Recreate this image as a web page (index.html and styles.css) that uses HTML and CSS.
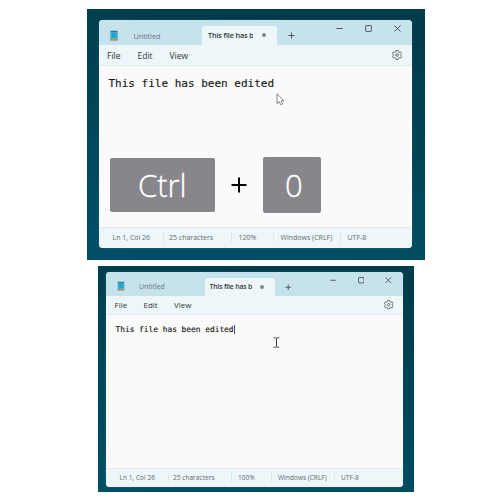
FILE: index.html
```
<!DOCTYPE html>
<html lang="en">
<head>
<meta charset="utf-8">
<title>Notepad zoom</title>
<link rel="stylesheet" href="styles.css">
</head>
<body>
<svg width="0" height="0" class="defs" aria-hidden="true">
  <symbol id="pad" viewBox="0 0 8 11">
    <rect x=".3" y="1" width="7.4" height="8.5" rx=".7" fill="#38b3d6"/>
    <path d="M.6 1h6.8v1H.6z" fill="#1d6f91"/>
    <path d="M1.2.2v1.3M2.6.2v1.3M4 .2v1.3M5.4.2v1.3M6.8.2v1.3" stroke="#4b91a9" stroke-width=".55"/>
    <path d="M1.8 3.5h4.4M1.8 5.1h4.4M1.8 6.7h4.4" stroke="#1c8db4" stroke-width=".7"/>
    <path d="M.1 9.200h7.800v.7q0 .8-.8.8H.900q-.8 0-.8-.8z" fill="#cf8450"/>
  </symbol>
  <symbol id="gear" viewBox="0 0 20 20">
    <path d="M8 .8h4l.6 2.800 2 1.100 2.700-.8 2 3.500-2.100 1.900v1.400l2.100 1.900-2 3.500-2.700-.8-2 1.100-.6 2.800H8l-.6-2.800-2-1.100-2.700.8-2-3.500 2.100-1.900V9.300L.7 7.400l2-3.500 2.700.8 2-1.100z" fill="none" stroke="#51595c" stroke-width="1.700" stroke-linejoin="round"/>
    <circle cx="10" cy="10" r="2.700" fill="none" stroke="#51595c" stroke-width="1.700"/>
  </symbol>
</svg>
<main>
  <section class="desktop large">
    <div class="window">
      <header class="titlebar">
        <svg class="app"><use href="#pad"/></svg>
        <span class="untitled">Untitled</span>
        <div class="tab"><b>This file has b</b><i></i></div>
        <svg class="add" viewBox="0 0 7 7"><path d="M3.500 .5v6M.5 3.500h6"/></svg>
        <svg class="ctl" viewBox="0 0 7 7"><path d="M.3 3.500h6.400"/></svg>
        <svg class="ctl" viewBox="0 0 7 7"><rect x=".6" y=".6" width="5.800" height="5.800" rx=".5"/></svg>
        <svg class="ctl" viewBox="0 0 7 7"><path d="M.5.5l6 6M6.500.5l-6 6"/></svg>
      </header>
      <nav class="menu"><span>File</span><span>Edit</span><span>View</span><svg class="gear"><use href="#gear"/></svg></nav>
      <div class="editor">
        <p>This file has been edited</p>
        <svg class="pointer" viewBox="0 0 9 13"><path d="M1 .8v9.800l2.200-2 1.500 3.100 1.900-.8-1.400-3H8z"/></svg>
        <div class="keys"><kbd class="ctrl">Ctrl</kbd><svg class="plus" viewBox="0 0 16 16"><path d="M8 .5v15M.5 8h15"/></svg><kbd class="zero">0</kbd></div>
      </div>
      <footer class="status"><span>Ln 1, Col 26</span><span>25 characters</span><span>120%</span><span>Windows (CRLF)</span><span>UTF-8</span></footer>
    </div>
  </section>
  <section class="desktop small">
    <div class="window">
      <header class="titlebar">
        <svg class="app"><use href="#pad"/></svg>
        <span class="untitled">Untitled</span>
        <div class="tab"><b>This file has b</b><i></i></div>
        <svg class="add" viewBox="0 0 7 7"><path d="M3.500 .5v6M.5 3.500h6"/></svg>
        <svg class="ctl" viewBox="0 0 7 7"><path d="M.3 3.500h6.400"/></svg>
        <svg class="ctl" viewBox="0 0 7 7"><rect x=".6" y=".6" width="5.800" height="5.800" rx=".5"/></svg>
        <svg class="ctl" viewBox="0 0 7 7"><path d="M.5.5l6 6M6.500.5l-6 6"/></svg>
      </header>
      <nav class="menu"><span>File</span><span>Edit</span><span>View</span><svg class="gear"><use href="#gear"/></svg></nav>
      <div class="editor">
        <p>This file has been edited<i class="caret"></i></p>
        <svg class="ibeam" viewBox="0 0 7 11"><path d="M.7.8h2.100l.7.5.7-.5h2.100M3.500 1.200v8.600M.7 10.200h2.100l.7-.5.7.5h2.100"/></svg>
      </div>
      <footer class="status"><span>Ln 1, Col 26</span><span>25 characters</span><span>100%</span><span>Windows (CRLF)</span><span>UTF-8</span></footer>
    </div>
  </section>
</main>
</body>
</html>
```
FILE: styles.css
```
* { box-sizing: border-box; }
body { margin: 0; width: 500px; height: 500px; overflow: hidden; background: #fff; font-family: "Open Sans", "Noto Sans", sans-serif; }
.defs { position: absolute; }
main { padding-top: 9px; }
svg { display: block; }
.desktop { background: linear-gradient(10deg, #005068, #004a5e 30%, #003c4b 90%); }
.large { width: 338px; height: 250.500px; margin-left: 87px; padding: 11px 13px 12px 11.500px; }
.small { width: 316px; height: 226.500px; margin: 6px 0 0 97.500px; padding: 6.500px 11px 5.500px 8.500px; }
.window { height: 100%; display: flex; flex-direction: column; border-radius: 4px; overflow: hidden; background: #fafafa; box-shadow: 0 0 1px #6e9aa5; }
.titlebar { display: grid; background: #c5e2ed; flex: none; }
.titlebar > * { align-self: start; }
.untitled { color: #68777d; white-space: nowrap; }
.tab { display: flex; align-items: center; justify-content: space-between; background: #edf6f9; border-radius: 3px 3px 0 0; }
.tab b { overflow: hidden; white-space: nowrap; color: #30383b; font-weight: 600; }
.tab i { width: 4px; height: 4px; border-radius: 50%; background: #7c878b; }
.add, .ctl { fill: none; stroke: #3e4c51; stroke-width: .9; }
.menu { display: grid; align-items: center; flex: none; background: #edf6f9; border-bottom: 1px solid #dfecef; color: #30363a; }
.editor { flex: 1; position: relative; background: #fafafa; color: #18191a; }
.editor p { margin: 0; font-family: "DejaVu Sans Mono", monospace; white-space: pre; -webkit-text-stroke: .15px #18191a; }
.status { display: grid; align-items: center; flex: none; background: #edf6f9; border-top: 1px solid #e0ebee; color: #626b6f; }
.status span { white-space: nowrap; }
.status span + span { border-left: 1px solid #dce5e8; }

.large .titlebar { height: 25px; grid-template-columns: 11px 24px 68.500px 74.500px 11.500px 48px 28.500px 29.500px 17px; }
.large .titlebar .app { grid-column: 2; width: 8px; height: 11px; margin-top: 9.500px; }
.large .untitled { font-size: 7.200px; line-height: 12px; margin-top: 9.500px; }
.large .tab { height: 19.500px; margin-top: 5.500px; padding: 0 11px 0 6px; font-size: 7.300px; }
.large .tab b { width: 45px; letter-spacing: -.15px; }
.large .add { width: 7px; height: 7px; margin-top: 12px; grid-column: 6; }
.large .ctl { width: 7px; height: 7px; margin-top: 5px; }
.large .menu { height: 21px; grid-template-columns: 30.500px 32px 222.500px 10px; padding-left: 8.500px; font-size: 8.500px; }
.large .gear { width: 10px; height: 10px; }
.large .editor p { font-size: 11px; line-height: 14px; padding: 10.500px 0 0 10px; }
.pointer { position: absolute; left: 177.500px; top: 27px; width: 9px; height: 13px; fill: #fff; stroke: #666; stroke-width: .8; }
.keys { display: flex; align-items: center; margin: 66px 0 0 11.500px; }
kbd { display: flex; align-items: center; justify-content: center; background: #87868b; border-radius: 2px; color: #fff; font-family: "Open Sans", sans-serif; font-weight: 300; font-size: 31px; -webkit-text-stroke: .35px #fff; }
.ctrl { width: 104.500px; height: 53.500px; }
.zero { width: 57.500px; height: 56.500px; padding-left: 4px; }
.plus { width: 16px; height: 16px; margin: 0 16px 0 16.500px; stroke: #000; stroke-width: 2; }
.large .status { height: 21px; grid-template-columns: 50.500px 68px 42px 67px 60px; padding-left: 14px; font-size: 7px; }
.large .status span + span { padding-left: 5px; }
.large .status span:nth-child(n+3) { padding-left: 6.500px; }

.small .titlebar { height: 23.500px; grid-template-columns: 11px 22px 65.500px 70px 10.500px 45px 27.500px 27.500px 17px; }
.small .titlebar .app { grid-column: 2; width: 8px; height: 10px; margin-top: 9px; }
.small .untitled { font-size: 6.900px; line-height: 12px; margin-top: 8.500px; }
.small .tab { height: 18px; margin-top: 5.500px; padding: 0 10.500px 0 5px; font-size: 6.900px; }
.small .tab b { width: 43px; letter-spacing: -.17px; }
.small .add { width: 6.500px; height: 6.500px; margin-top: 11.500px; grid-column: 6; }
.small .ctl { width: 6.500px; height: 6.500px; margin-top: 5px; }
.small .menu { height: 19.500px; grid-template-columns: 29px 30.500px 210px 9px; padding-left: 8.500px; font-size: 8px; }
.small .gear { width: 9.500px; height: 9.500px; }
.small .editor p { display: flex; font-size: 7.850px; line-height: 12px; padding: 8.500px 0 0 9.500px; }
.caret { width: 1px; height: 9px; background: #555; margin-top: 1.500px; }
.ibeam { position: absolute; left: 166.500px; top: 22px; width: 7px; height: 11px; fill: none; stroke: #444; stroke-width: 1; }
.small .status { height: 18.500px; grid-template-columns: 48.500px 63px 40px 63px 60px; padding-left: 13.500px; font-size: 6.600px; }
.small .status span + span { padding-left: 4px; }
.small .status span:nth-child(n+3) { padding-left: 6px; }
```
